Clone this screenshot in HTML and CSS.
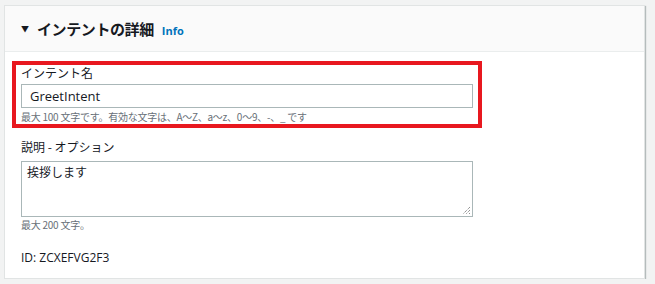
FILE: index.html
```html
<!DOCTYPE html>
<html lang="ja">
<head>
<meta charset="utf-8">
<link rel="stylesheet" href="styles.css">
</head>
<body>
<div class="card">
  <div class="card-header">
    <span class="caret">▼</span>
    <h2 class="title">インテントの詳細</h2>
    <a class="info">Info</a>
  </div>
  <div class="card-body">
    <div class="field highlighted">
      <label class="label">インテント名</label>
      <div class="input">GreetIntent</div>
      <div class="hint">最大 100 文字です。有効な文字は、A〜Z、a〜z、0〜9、-、_ です</div>
    </div>
    <div class="field field2">
      <label class="label">説明 - オプション</label>
      <div class="textarea">挨拶します
        <svg class="grip" width="9" height="9" viewBox="0 0 9 9"><path d="M8 1 L1 8 M8 4 L4 8 M8 7 L7 8" stroke="#666" stroke-width="1" stroke-dasharray="1 1"/></svg>
      </div>
      <div class="hint">最大 200 文字。</div>
    </div>
    <div class="id">ID: ZCXEFVG2F3</div>
  </div>
</div>
</body>
</html>
```
FILE: styles.css
```css
html, body {
  margin: 0;
  padding: 0;
  background: #f2f3f3;
  font-family: "Open Sans", "Noto Sans CJK JP", sans-serif;
  color: #16191f;
}
.card {
  margin: 5px 10px 0 4px;
  background: #fff;
  border: 1px solid #e1e4e4;
  box-shadow: 1px 1px 1px rgba(0,22,22,0.25);
  height: 274px;
  box-sizing: border-box;
}
.card-header {
  height: 46px;
  background: #fafafa;
  border-bottom: 1px solid #eaeded;
  display: flex;
  align-items: center;
  padding-left: 16px;
  box-sizing: border-box;
}
.caret {
  font-size: 8px;
  width: 9px;
  margin-right: 7px;
  line-height: 1;
  margin-top: 1px;
}
.title {
  margin: 0;
  font-size: 15px;
  font-weight: bold;
  font-family: "Noto Sans CJK JP", sans-serif;
  letter-spacing: -0.4px;
}
.info {
  margin-left: 8px;
  color: #0073bb;
  font-size: 11px;
  font-weight: bold;
  margin-top: 3px;
}
.card-body {
  padding: 13px 171px 0 16px;
}
.field {
  position: relative;
}
.highlighted::after {
  content: "";
  position: absolute;
  left: -9px;
  right: -9px;
  top: -4px;
  bottom: -4px;
  border: 4px solid #e8181f;
  box-sizing: border-box;
}
.label {
  display: block;
  font-size: 12px;
  line-height: 16px;
  font-family: "Noto Sans CJK JP", sans-serif;
  margin-bottom: 3px;
}
.input {
  height: 24px;
  border: 1px solid #aab7b8;
  box-sizing: border-box;
  font-size: 13px;
  line-height: 22px;
  padding-left: 8px;
}
.hint {
  font-size: 10px;
  line-height: 14px;
  color: #687078;
  margin-top: 2px;
  font-family: "Noto Sans CJK JP", sans-serif;
  letter-spacing: -0.25px;
}
.field2 {
  margin-top: 15px;
}
.field2 .label {
  margin-bottom: 6px;
}
.textarea {
  position: relative;
  height: 56px;
  border: 1px solid #aab7b8;
  box-sizing: border-box;
  font-size: 12px;
  line-height: 18px;
  padding: 1px 5px;
  font-family: "Noto Sans CJK JP", sans-serif;
}
.grip {
  position: absolute;
  right: 1px;
  bottom: 1px;
}
.field2 .hint {
  margin-top: 1px;
}
.id {
  margin-top: 17px;
  font-size: 12px;
  line-height: 18px;
}
```
